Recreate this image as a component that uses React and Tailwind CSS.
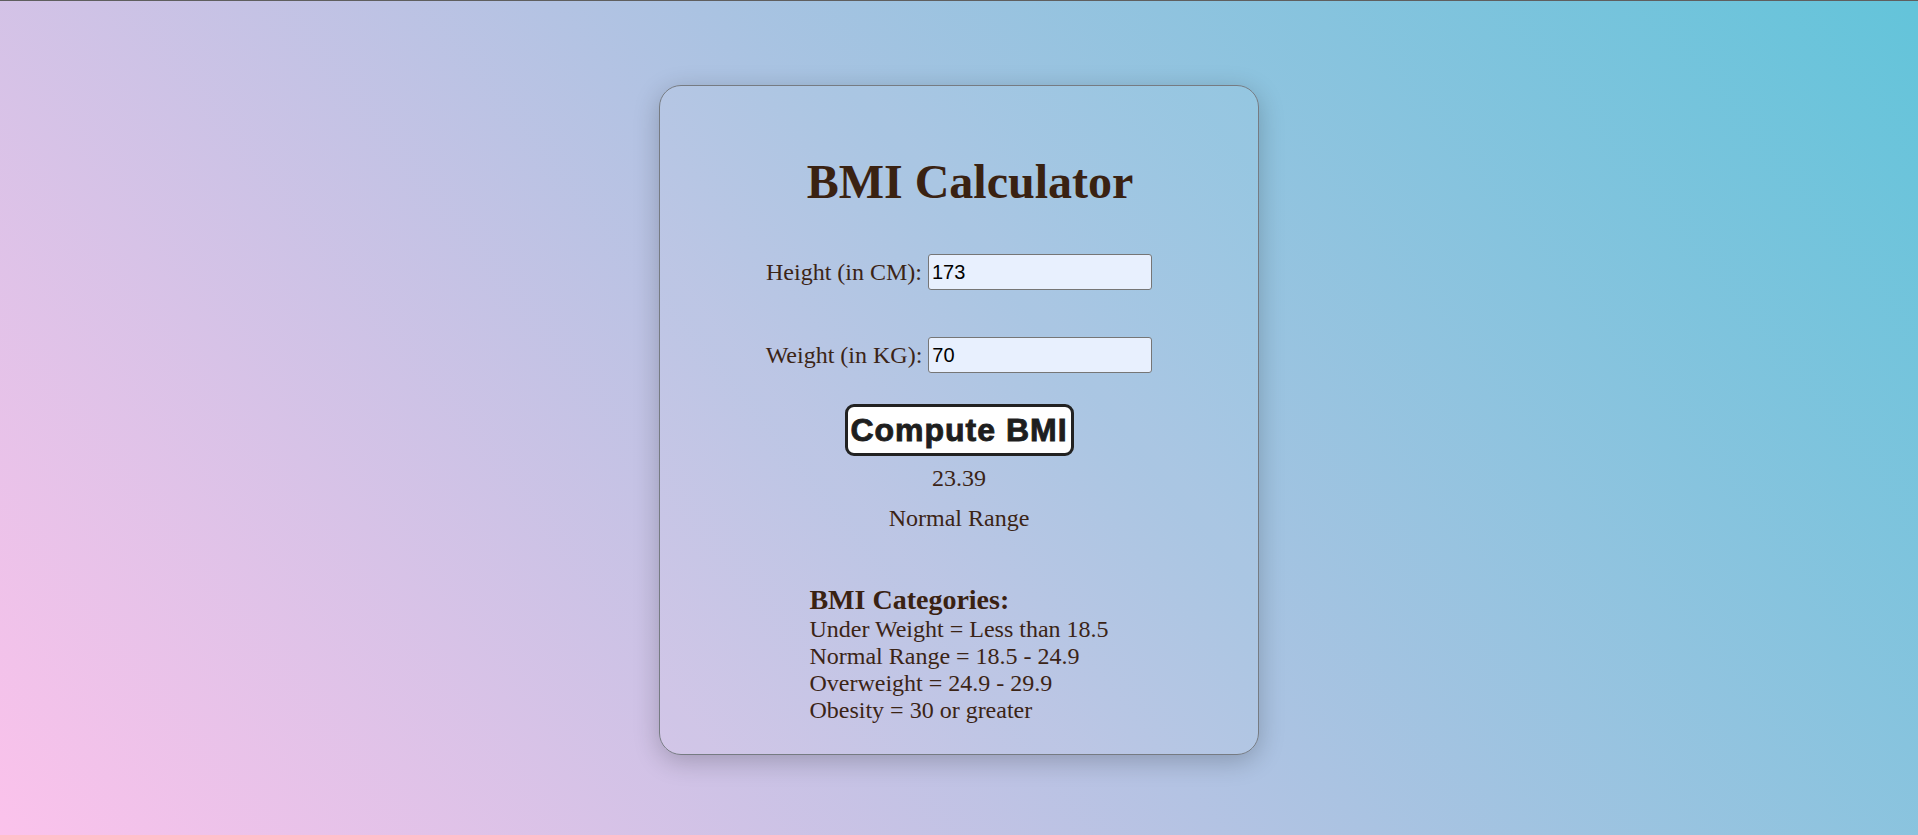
import React from "react";

export default function App() {
  const serif = { fontFamily: '"Liberation Serif", "Times New Roman", serif' };
  return (
    <div
      className="min-h-screen w-full border-t border-[#5f5f5f] bg-[linear-gradient(51deg,#fbc2eb,#63c4da)] text-[#3b2416]"
      style={serif}
    >
      <div className="mx-auto mt-[84px] flex h-[670px] w-[600px] flex-col items-center rounded-[22px] border border-[#767b82] bg-white/5 shadow-[0_6px_26px_rgba(0,0,0,0.22)]">
        <h1 className="ml-[22px] mt-[68px] text-[48px] font-bold leading-[56px] text-[#3a2212]">
          BMI Calculator
        </h1>

        <div className="mt-[44px] flex h-[36px] items-center">
          <label className="text-[24px] leading-[28px]">Height (in CM):</label>
          <input
            type="text"
            defaultValue="173"
            className="ml-[6px] h-[36px] w-[224px] rounded-[3px] border border-[#767676] bg-[#e8f0fe] px-[3px] text-[20px] text-black outline-none"
            style={{ fontFamily: '"Liberation Sans", Arial, sans-serif' }}
          />
        </div>

        <div className="mt-[47px] flex h-[36px] items-center">
          <label className="text-[24px] leading-[28px]">Weight (in KG):</label>
          <input
            type="text"
            defaultValue="70"
            className="ml-[6px] h-[36px] w-[224px] rounded-[3px] border border-[#767676] bg-[#e8f0fe] px-[3px] text-[20px] text-black outline-none"
            style={{ fontFamily: '"Liberation Sans", Arial, sans-serif' }}
          />
        </div>

        <button
          className="mt-[31px] flex h-[52px] w-[229px] items-center justify-center rounded-[9px] border-[3px] border-[#222222] bg-white text-[32px] font-bold tracking-[1px] text-[#1e1e1e] [-webkit-text-stroke:0.9px_#1e1e1e]"
          style={{ fontFamily: '"Liberation Sans", Arial, sans-serif' }}
        >
          Compute BMI
        </button>

        <div className="mt-[8px] text-[24px] leading-[28px]">23.39</div>
        <div className="mt-[12px] text-[24px] leading-[28px]">Normal Range</div>

        <div className="mt-[52px] w-fit text-left">
          <h3 className="text-[28px] font-bold leading-[32px] text-[#3a2212]">BMI Categories:</h3>
          <div className="text-[24px] leading-[27px]">
            <div>Under Weight = Less than 18.5</div>
            <div>Normal Range = 18.5 - 24.9</div>
            <div>Overweight = 24.9 - 29.9</div>
            <div>Obesity = 30 or greater</div>
          </div>
        </div>
      </div>
    </div>
  );
}
